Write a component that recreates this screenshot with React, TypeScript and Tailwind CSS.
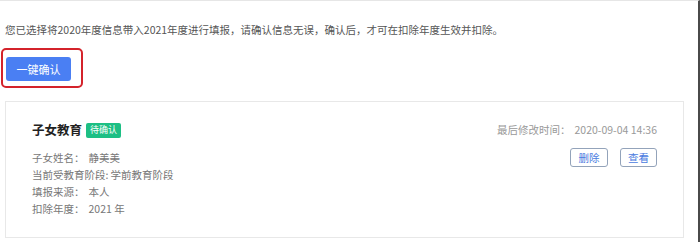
const font = { fontFamily: '"Noto Sans CJK SC", "Noto Sans", sans-serif' }

interface IInfoRow {
  label: string
  value: string
}

const rows: IInfoRow[] = [
  { label: '子女姓名：', value: '静美美' },
  { label: '当前受教育阶段:', value: '学前教育阶段' },
  { label: '填报来源：', value: '本人' },
  { label: '扣除年度：', value: '2021 年' },
]

const App = () => {
  return (
    <div
      className="relative w-[700px] h-[242px] overflow-hidden bg-white border-t border-t-[#e6e6e6] border-r-2 border-r-[#4a4a4a]"
      style={font}>
      {/* 提示文字 */}
      <p className="pl-[5px] pt-[21px] text-[10.5px] leading-[16px] text-[#555]">
        您已选择将2020年度信息带入2021年度进行填报，请确认信息无误，确认后，才可在扣除年度生效并扣除。
      </p>
      {/* 一键确认 */}
      <div className="pl-[6px] pt-[19px]">
        <button className="flex items-center justify-center w-[65px] h-[24px] rounded-[3px] bg-[#4a7ff3] text-white text-[11px]">
          一键确认
        </button>
      </div>
      <div className="absolute left-[1px] top-[47px] w-[82px] h-[40px] rounded-[5px] border-2 border-[#d4232b]" />
      {/* 卡片 */}
      <div className="mt-[20px] ml-[5px] w-[679px] h-[137px] border border-[#e8e8e8] flex justify-between pl-[26px] pr-[26px] pt-[12px]">
        <div className="flex flex-col">
          <div className="flex items-center h-[18px] mt-[7px]">
            <span className="text-[12.5px] font-bold text-[#222]">子女教育</span>
            <span className="ml-[4px] h-[15px] px-[4px] flex items-center rounded-[2px] bg-[#1dbf84] text-white text-[9px]">
              待确认
            </span>
          </div>
          <div className="mt-[10px] flex flex-col">
            {rows.map((row) => (
              <div key={row.label} className="text-[10.5px] leading-[17px] text-[#777]">
                <span>{row.label}</span>
                <span className={row.label.endsWith(':') ? 'ml-[2px]' : 'ml-[4px]'}>{row.value}</span>
              </div>
            ))}
          </div>
        </div>
        <div className="flex flex-col items-end">
          <div className="h-[18px] mt-[7px] flex items-center text-[10.5px] text-[#999]">
            <span>最后修改时间：</span>
            <span className="ml-[4px]">2020-09-04 14:36</span>
          </div>
          <div className="flex gap-[12px] mt-[9px]">
            <button className="w-[38px] h-[19px] flex items-center justify-center rounded-[3px] border border-[#93a3ba] text-[#4a7be0] text-[10.5px]">
              删除
            </button>
            <button className="w-[37px] h-[19px] flex items-center justify-center rounded-[3px] border border-[#93a3ba] text-[#4a7be0] text-[10.5px]">
              查看
            </button>
          </div>
        </div>
      </div>
    </div>
  )
}
export default App
